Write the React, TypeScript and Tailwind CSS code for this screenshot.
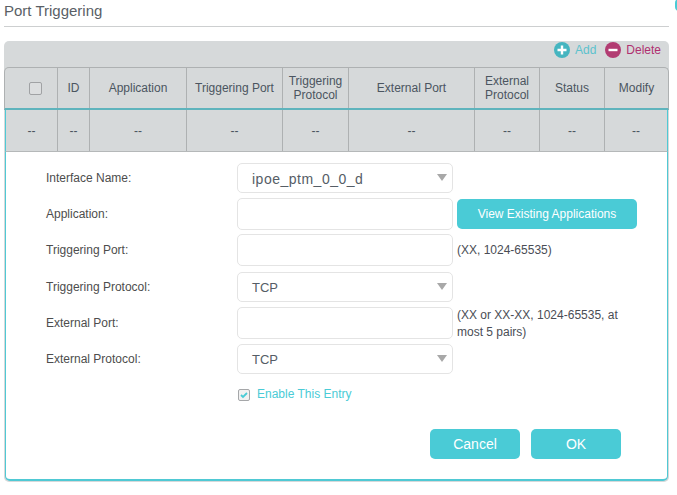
import { ReactNode } from "react";

const columns: { label: ReactNode; width: string; cell: string }[] = [
  {
    label: <span className="ml-[8px] block h-[13px] w-[13px] rounded-[2px] border border-[#a0a2a4] bg-[#dcdedf]" />,
    width: "w-[53px]",
    cell: "w-[52px]",
  },
  { label: "ID", width: "w-[32px]", cell: "w-[32px]" },
  { label: "Application", width: "w-[97px]", cell: "w-[97px]" },
  { label: "Triggering Port", width: "w-[96px]", cell: "w-[96px]" },
  { label: "Triggering Protocol", width: "w-[66px]", cell: "w-[66px]" },
  { label: "External Port", width: "w-[126px]", cell: "w-[126px]" },
  { label: "External Protocol", width: "w-[65px]", cell: "w-[65px]" },
  { label: "Status", width: "w-[65px]", cell: "w-[65px]" },
  { label: "Modify", width: "w-[63px]", cell: "w-[62px]" },
];

function Select({ value, text }: { value: string; text: string }) {
  return (
    <div className={`relative flex h-[30px] w-[216px] items-center rounded-[5px] border border-[#e4e4e4] pl-[14px] pt-[2px] text-[#555d66] ${text}`}>
      {value}
      <span className="absolute right-[5px] top-[10px] h-0 w-0 border-x-[5px] border-t-[7px] border-x-transparent border-t-[#a8a8a8]" />
    </div>
  );
}

function Input() {
  return <div className="h-[32px] w-[216px] rounded-[5px] border border-[#e4e4e4]" />;
}

function Row({ label, mt, pt, children, side }: { label: string; mt: string; pt: string; children: ReactNode; side?: ReactNode }) {
  return (
    <div className={`flex items-start ${mt}`}>
      <div className={`w-[191px] text-[12px] leading-[15px] text-[#4d4d4d] ${pt}`}>{label}</div>
      {children}
      {side}
    </div>
  );
}

const hint = "ml-[4px] text-[12px] text-[#4a4d55]";

export default function App() {
  return (
    <div className="relative h-[495px] w-[677px] overflow-hidden bg-white font-['Liberation_Sans',Arial,sans-serif]">
      <span className="absolute -right-[6px] -top-[1px] h-[12px] w-[8px] rounded-full bg-[#4acbd6]" />
      <div className="mx-[4px] h-[27px] w-[665px] border-b border-[#cdcfd0] text-[15px] leading-[22px] text-[#5a5f66]">
        Port Triggering
      </div>

      <div className="mx-[4px] mt-[14px] w-[665px] rounded-[5px] bg-[#d6d9da] pb-[1px]">
        <div className="flex h-[26px] items-start justify-end pr-[8px] pt-[1px] text-[12px] leading-[15px]">
          <svg width="16" height="16" viewBox="0 0 16 16">
            <circle cx="8" cy="8" r="8" fill="#45b5c0" />
            <path d="M8 3.5v9M3.5 8h9" stroke="#fff" strokeWidth="2.4" />
          </svg>
          <span className="ml-[5px] mt-[1px] text-[#5cc2cd]">Add</span>
          <svg className="ml-[9px]" width="16" height="16" viewBox="0 0 16 16">
            <circle cx="8" cy="8" r="8" fill="#b23c72" />
            <path d="M3.5 8h9" stroke="#fff" strokeWidth="2.4" />
          </svg>
          <span className="ml-[5px] mt-[1px] text-[#b03070]">Delete</span>
        </div>

        <div className="flex h-[43px] rounded-t-[5px] border-x border-t border-[#aeb1b2] border-b-2 border-b-[#5fb4bd] text-center text-[12px] leading-[14px] text-[#4b5560]">
          {columns.map((c, i) => (
            <div key={i} className={`flex h-full shrink-0 items-center justify-center border-[#aeb1b2] not-last:border-r ${c.width}`}>
              {c.label}
            </div>
          ))}
        </div>

        <div className="mx-[1px]">
          <div className="flex h-[42px] border-x border-x-[#4fc9d4] border-b border-b-[#b5b8b9] text-center text-[12px] text-[#4b5560]">
            {columns.map((c, i) => (
              <div key={i} className={`flex h-full shrink-0 items-center justify-center border-[#aeb1b2] not-last:border-r ${c.cell}`}>
                --
              </div>
            ))}
          </div>

          <div className="h-[329px] rounded-b-[5px] border-x border-b-2 border-[#4fc9d4] bg-white pl-[40px] pt-[11px]">
            <Row label="Interface Name:" mt="mt-0" pt="pt-[8px]">
              <Select value="ipoe_ptm_0_0_d" text="text-[14px] tracking-[0.5px]" />
            </Row>
            <Row
              label="Application:"
              mt="mt-[5px]"
              pt="pt-[9px]"
              side={
                <div className="ml-[4px] mt-[1px] flex h-[30px] w-[180px] items-center justify-center rounded-[5px] bg-[#4acbd6] text-[12px] text-white">
                  View Existing Applications
                </div>
              }
            >
              <Input />
            </Row>
            <Row label="Triggering Port:" mt="mt-[4px]" pt="pt-[9px]" side={<div className={`${hint} pt-[9px] leading-[15px]`}>(XX, 1024-65535)</div>}>
              <Input />
            </Row>
            <Row label="Triggering Protocol:" mt="mt-[6px]" pt="pt-[8px]">
              <Select value="TCP" text="text-[13px]" />
            </Row>
            <Row label="External Port:" mt="mt-[5px]" pt="pt-[9px]" side={<div className={`${hint} h-[32px] w-[170px] leading-[17px]`}>(XX or XX-XX, 1024-65535, at most 5 pairs)</div>}>
              <Input />
            </Row>
            <Row label="External Protocol:" mt="mt-[5px]" pt="pt-[8px]">
              <Select value="TCP" text="text-[13px]" />
            </Row>

            <div className="ml-[192px] mt-[13px] flex items-center text-[12px] leading-[15px] text-[#4acbd6]">
              <span className="flex h-[12px] w-[12px] items-center justify-center rounded-[2px] border border-[#a5a7a9] bg-[#f1f1f1]">
                <svg width="8" height="8" viewBox="0 0 8 8">
                  <path d="M1 4l2 2 4-4" fill="none" stroke="#4acbd6" strokeWidth="1.8" />
                </svg>
              </span>
              <span className="ml-[7px]">Enable This Entry</span>
            </div>

            <div className="ml-[384px] mt-[27px] flex gap-[11px] text-[14px] text-white">
              <div className="flex h-[30px] w-[90px] items-center justify-center rounded-[5px] bg-[#4acbd6]">Cancel</div>
              <div className="flex h-[30px] w-[90px] items-center justify-center rounded-[5px] bg-[#4acbd6]">OK</div>
            </div>
          </div>
        </div>
      </div>
    </div>
  );
}
